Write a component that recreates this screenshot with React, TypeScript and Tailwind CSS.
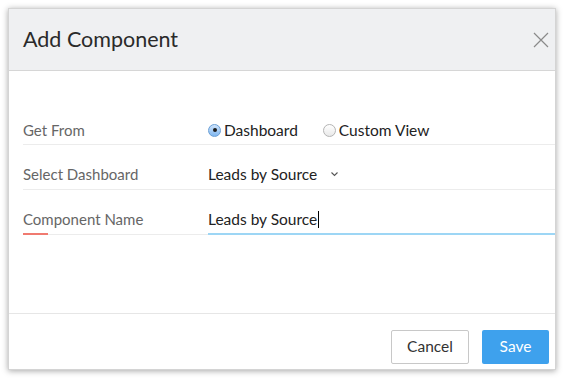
import React from 'react';

const font = { fontFamily: 'Lato, "Open Sans", sans-serif' };

const Radio: React.FC<{ checked?: boolean; label: string }> = ({ checked, label }) => (
  <label className="flex items-center gap-[3px] text-[15.5px] text-[#222]">
    <span
      className={
        checked
          ? 'flex h-[13px] w-[13px] items-center justify-center rounded-full border border-[#6a9fd6] bg-gradient-to-b from-[#cfe4fb] to-[#7fb6ef]'
          : 'flex h-[13px] w-[13px] items-center justify-center rounded-full border border-[#b4b4b4] bg-gradient-to-b from-white to-[#e9e9e9]'
      }
    >
      {checked && <span className="h-[4px] w-[4px] rounded-full bg-[#1b1b1b]" />}
    </span>
    {label}
  </label>
);

const App: React.FC = () => {
  return (
    <div className="h-[379px] w-[564px] bg-white p-[8px]" style={font}>
      <div className="flex h-[362px] w-[548px] flex-col border border-[#d4d4d4] bg-white shadow-[0_1px_6px_rgba(0,0,0,0.35)]">
        <header className="flex h-[62px] items-center justify-between border-b border-[#d6d6d6] bg-[#eff0f2] pl-[14px] pr-[6px]">
          <h1 className="text-[21.5px] text-[#2a2a2a]">Add Component</h1>
          <button className="text-[#8a8a8a]">
            <svg width="16" height="16" viewBox="0 0 16 16" fill="none" stroke="currentColor" strokeWidth="1.2">
              <path d="M1 1 L15 15 M15 1 L1 15" />
            </svg>
          </button>
        </header>

        <main className="flex-1 pt-[29px]">
          <div className="ml-[14px] flex h-[45px] items-end border-b border-[#ececec] pb-[4px]">
            <div className="w-[185px] text-[15px] leading-[20px] text-[#666]">Get From</div>
            <div className="flex items-center gap-[25px] leading-[20px]">
              <Radio checked label="Dashboard" />
              <Radio label="Custom View" />
            </div>
          </div>
          <div className="ml-[14px] flex h-[45px] items-end border-b border-[#ececec] pb-[5px]">
            <div className="w-[185px] text-[15px] leading-[20px] text-[#666]">Select Dashboard</div>
            <div className="flex items-center gap-[13px] text-[15.5px] leading-[20px] text-[#222]">
              Leads by Source
              <svg width="9" height="6" viewBox="0 0 9 6" fill="none" stroke="#555" strokeWidth="1.1">
                <path d="M1.5 1.5 L4.5 4.5 L7.5 1.5" />
              </svg>
            </div>
          </div>
          <div className="ml-[14px] flex h-[45px] items-end border-b border-[#ececec]">
            <div className="relative w-[185px] pb-[5px] text-[15px] leading-[20px] text-[#666]">
              Component Name
              <span className="absolute bottom-[-1px] left-0 h-[2px] w-[25px] bg-[#f07a70]" />
            </div>
            <div className="relative flex-1 pb-[5px] text-[15.5px] leading-[20px] text-[#222]">
              Leads by Source<span className="ml-[1px] inline-block h-[17px] w-[1px] translate-y-[3px] bg-black" />
              <span className="absolute bottom-[-1px] left-0 right-0 h-[2px] bg-[#9dd6f5]" />
            </div>
          </div>
        </main>

        <footer className="flex items-start justify-end gap-[13px] border-t border-[#e6e6e6] pr-[6px] pt-[16px] pb-[5px]">
          <button className="h-[34px] w-[78px] rounded-[2px] border border-[#c8c8c8] bg-white text-[15.5px] text-[#333]">
            Cancel
          </button>
          <button className="h-[34px] w-[67px] rounded-[2px] bg-[#3ea1ed] text-[15.5px] text-white">Save</button>
        </footer>
      </div>
    </div>
  );
};

export default App;
